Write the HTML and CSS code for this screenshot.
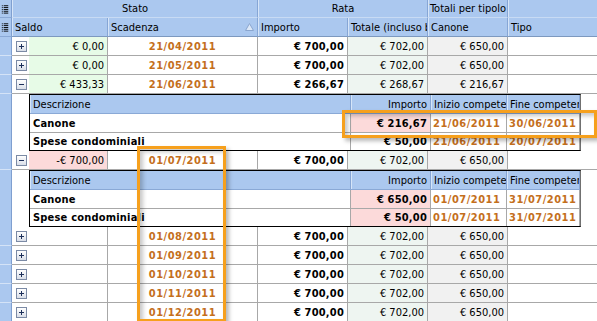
FILE: index.html
```html
<!DOCTYPE html>
<html>
<head>
<meta charset="utf-8">
<link rel="stylesheet" href="styles.css">
</head>
<body>
<div class="grid">
  <div class="hrow band">
    <div class="ind hind"><svg width="12" height="17" viewBox="0 0 12 17"><g fill="#000"><rect x="2" y="5" width="1" height="1"/><rect x="2" y="7" width="1" height="1"/><rect x="2" y="9" width="1" height="1"/><rect x="2" y="11" width="1" height="1"/><rect x="2" y="13" width="1" height="1"/><rect x="4" y="5" width="5" height="1"/><rect x="4" y="7" width="5" height="1"/><rect x="4" y="9" width="5" height="1"/><rect x="4" y="11" width="5" height="1"/><rect x="4" y="13" width="5" height="1"/></g></svg></div>
    <div class="hc center">Stato</div>
    <div class="hc center">Rata</div>
    <div class="hc center">Totali per tipolo</div>
    <div class="hc last"></div>
  </div>
  <div class="hrow cols">
    <div class="ind hind"><svg width="12" height="18" viewBox="0 0 12 18"><g fill="#000"><rect x="2" y="5" width="1" height="1"/><rect x="2" y="7" width="1" height="1"/><rect x="2" y="9" width="1" height="1"/><rect x="2" y="11" width="1" height="1"/><rect x="2" y="13" width="1" height="1"/><rect x="4" y="5" width="5" height="1"/><rect x="4" y="7" width="5" height="1"/><rect x="4" y="9" width="5" height="1"/><rect x="4" y="11" width="5" height="1"/><rect x="4" y="13" width="5" height="1"/></g></svg></div>
    <div class="hc">Saldo</div>
    <div class="hc sortable">Scadenza<svg class="sort" width="9" height="8" viewBox="0 0 9 8"><polygon points="4.5,0.5 8.5,7.5 0.5,7.5" fill="#dce8f8" stroke="#8aa6cf"/></svg></div>
    <div class="hc">Importo</div>
    <div class="hc">Totale (incluso bollo)</div>
    <div class="hc">Canone</div>
    <div class="hc last">Tipo</div>
  </div>

  <div class="row">
    <div class="ind"></div>
    <div class="btn-cell"><span class="exp plus"></span></div>
    <div class="c num saldo-pos">€ 0,00</div>
    <div class="c date">21/04/2011</div>
    <div class="c num bold">€ 700,00</div>
    <div class="c num tot">€ 702,00</div>
    <div class="c num can">€ 650,00</div>
    <div class="c last"></div>
  </div>
  <div class="row">
    <div class="ind"></div>
    <div class="btn-cell"><span class="exp plus"></span></div>
    <div class="c num saldo-pos">€ 0,00</div>
    <div class="c date">21/05/2011</div>
    <div class="c num bold">€ 700,00</div>
    <div class="c num tot">€ 702,00</div>
    <div class="c num can">€ 650,00</div>
    <div class="c last"></div>
  </div>
  <div class="row">
    <div class="ind"></div>
    <div class="btn-cell"><span class="exp minus"></span></div>
    <div class="c num saldo-pos">€ 433,33</div>
    <div class="c date">21/06/2011</div>
    <div class="c num bold">€ 266,67</div>
    <div class="c num tot">€ 268,67</div>
    <div class="c num can">€ 216,67</div>
    <div class="c last"></div>
  </div>

  <div class="detail">
    <div class="ind"></div>
    <div class="btn-cell"></div>
    <div class="sub">
      <div class="sh">Descrizione</div>
      <div class="sh num">Importo</div>
      <div class="sh">Inizio competenza</div>
      <div class="sh">Fine competenza</div>
      <div class="sc bold">Canone</div>
      <div class="sc num bold pink">€ 216,67</div>
      <div class="sc sdate">21/06/2011</div>
      <div class="sc sdate">30/06/2011</div>
      <div class="sc bold lastrow">Spese condominiali</div>
      <div class="sc num bold lastrow">€ 50,00</div>
      <div class="sc sdate lastrow">21/06/2011</div>
      <div class="sc sdate lastrow">20/07/2011</div>
    </div>
  </div>

  <div class="row">
    <div class="ind"></div>
    <div class="btn-cell"><span class="exp minus"></span></div>
    <div class="c num saldo-neg">-€ 700,00</div>
    <div class="c date">01/07/2011</div>
    <div class="c num bold">€ 700,00</div>
    <div class="c num tot">€ 702,00</div>
    <div class="c num can">€ 650,00</div>
    <div class="c last"></div>
  </div>

  <div class="detail">
    <div class="ind"></div>
    <div class="btn-cell"></div>
    <div class="sub">
      <div class="sh">Descrizione</div>
      <div class="sh num">Importo</div>
      <div class="sh">Inizio competenza</div>
      <div class="sh">Fine competenza</div>
      <div class="sc bold">Canone</div>
      <div class="sc num bold pink">€ 650,00</div>
      <div class="sc sdate">01/07/2011</div>
      <div class="sc sdate">31/07/2011</div>
      <div class="sc bold lastrow">Spese condominiali</div>
      <div class="sc num bold pink lastrow">€ 50,00</div>
      <div class="sc sdate lastrow">01/07/2011</div>
      <div class="sc sdate lastrow">31/07/2011</div>
    </div>
  </div>

  <div class="row">
    <div class="ind"></div>
    <div class="btn-cell"><span class="exp plus"></span></div>
    <div class="c num"></div>
    <div class="c date">01/08/2011</div>
    <div class="c num bold">€ 700,00</div>
    <div class="c num tot">€ 702,00</div>
    <div class="c num can">€ 650,00</div>
    <div class="c last"></div>
  </div>
  <div class="row">
    <div class="ind"></div>
    <div class="btn-cell"><span class="exp plus"></span></div>
    <div class="c num"></div>
    <div class="c date">01/09/2011</div>
    <div class="c num bold">€ 700,00</div>
    <div class="c num tot">€ 702,00</div>
    <div class="c num can">€ 650,00</div>
    <div class="c last"></div>
  </div>
  <div class="row">
    <div class="ind"></div>
    <div class="btn-cell"><span class="exp plus"></span></div>
    <div class="c num"></div>
    <div class="c date">01/10/2011</div>
    <div class="c num bold">€ 700,00</div>
    <div class="c num tot">€ 702,00</div>
    <div class="c num can">€ 650,00</div>
    <div class="c last"></div>
  </div>
  <div class="row">
    <div class="ind"></div>
    <div class="btn-cell"><span class="exp plus"></span></div>
    <div class="c num"></div>
    <div class="c date">01/11/2011</div>
    <div class="c num bold">€ 700,00</div>
    <div class="c num tot">€ 702,00</div>
    <div class="c num can">€ 650,00</div>
    <div class="c last"></div>
  </div>
  <div class="row">
    <div class="ind"></div>
    <div class="btn-cell"><span class="exp plus"></span></div>
    <div class="c num"></div>
    <div class="c date">01/12/2011</div>
    <div class="c num bold">€ 700,00</div>
    <div class="c num tot">€ 702,00</div>
    <div class="c num can">€ 650,00</div>
    <div class="c last"></div>
  </div>

  <div class="mark mark-row"></div>
  <div class="mark mark-col"></div>
</div>
</body>
</html>
```

FILE: styles.css
```css
html, body {
  margin: 0;
  padding: 0;
  background: #fff;
  overflow: hidden;
}
.grid {
  position: relative;
  width: 597px;
  height: 321px;
  overflow: hidden;
  font-family: "DejaVu Sans Condensed", "DejaVu Sans", sans-serif;
  font-size: 11px;
  color: #000;
}
.hrow, .row, .detail {
  display: grid;
}
.band {
  grid-template-columns: 12px 246px 170px 80px 1fr;
  height: 18px;
}
.cols {
  grid-template-columns: 12px 96px 150px 90px 80px 80px 1fr;
  height: 19px;
}
.row {
  grid-template-columns: 12px 17px 79px 150px 90px 80px 80px 1fr;
  height: 19px;
}
.detail {
  grid-template-columns: 12px 17px 552px 1fr;
  height: 57px;
}
.ind {
  background: #abc8ef;
  border-right: 1px solid #7f9fd0;
  border-bottom: 1px solid #d4e3f7;
  box-sizing: border-box;
}
.detail .ind {
  border-bottom: none;
}
.hind {
  display: flex;
  align-items: flex-start;
  border-bottom: 1px solid #8aa9d6;
}
.hc {
  background: #abc8ef;
  box-sizing: border-box;
  border-right: 1px solid #86a6d5;
  box-shadow: inset 1px 0 0 #d6e5f8;
  display: flex;
  align-items: center;
  padding: 0 2px 0 3px;
  white-space: nowrap;
  overflow: hidden;
  position: relative;
}
.band .hc {
  border-bottom: 1px solid #c8dbf4;
}
.cols .hc {
  border-bottom: 1px solid #7d99bf;
}
.hc.center {
  justify-content: center;
}
.hc.last {
  border-right: none;
}
.sortable {
  justify-content: space-between;
}
.sort {
  margin-right: 1px;
}
.btn-cell {
  background: #fff;
  border-bottom: 1px solid #a8a8a8;
  box-sizing: border-box;
  display: flex;
  align-items: center;
  padding-left: 4px;
}
.detail .btn-cell {
  border-bottom: none;
}
.exp {
  width: 11px;
  height: 11px;
  box-sizing: border-box;
  border: 1px solid #7b8aa5;
  background: linear-gradient(#ffffff, #d9dee8);
  position: relative;
  margin-top: 1px;
}
.exp::before {
  content: "";
  position: absolute;
  left: 2px;
  top: 4px;
  width: 5px;
  height: 1px;
  background: #1c2f5a;
}
.exp.plus::after {
  content: "";
  position: absolute;
  left: 4px;
  top: 2px;
  width: 1px;
  height: 5px;
  background: #1c2f5a;
}
.c {
  box-sizing: border-box;
  border-right: 1px solid #a8a8a8;
  border-bottom: 1px solid #a8a8a8;
  display: flex;
  align-items: center;
  padding: 0 3px;
  white-space: nowrap;
  overflow: hidden;
}
.c.last {
  border-right: none;
}
.num {
  justify-content: flex-end;
}
.bold {
  font-weight: bold;
  letter-spacing: 0.2px;
}
.date {
  justify-content: center;
  font-weight: bold;
  color: #c46f1c;
  letter-spacing: 0.5px;
}
.saldo-pos {
  background: #e7fbe7;
}
.saldo-neg {
  background: #fcdada;
}
.tot {
  background: #eef5f1;
}
.can {
  background: #f1f1f1;
}
.sub {
  display: grid;
  grid-template-columns: 321px 80px 76px 1fr;
  grid-template-rows: 19px 19px 17px;
  border: 1px solid #000;
  border-right-color: #707070;
  box-sizing: border-box;
  height: 57px;
}
.sh {
  background: #abc8ef;
  box-sizing: border-box;
  border-right: 1px solid #86a6d5;
  border-bottom: 1px solid #8aa9d6;
  box-shadow: inset 1px 0 0 #d6e5f8;
  display: flex;
  align-items: center;
  padding: 0 2px 0 3px;
  white-space: nowrap;
  overflow: hidden;
}
.sh.num {
  justify-content: flex-end;
  padding-right: 3px;
}
.sc {
  box-sizing: border-box;
  border-right: 1px solid #a8a8a8;
  border-bottom: 1px solid #a8a8a8;
  display: flex;
  align-items: center;
  padding: 0 3px;
  white-space: nowrap;
  overflow: hidden;
}
.sc.lastrow {
  border-bottom: none;
}
.sc.num {
  justify-content: flex-end;
}
.sdate {
  font-weight: bold;
  color: #c46f1c;
  padding-left: 2px;
  letter-spacing: 0.5px;
}
.pink {
  background: #fcdada;
}
.mark {
  position: absolute;
  box-sizing: border-box;
  border: 3px solid #f6a01d;
  box-shadow: 3px 3px 4px rgba(0, 0, 0, 0.28), inset 3px 3px 4px rgba(0, 0, 0, 0.22);
  pointer-events: none;
}
.mark-row {
  left: 342px;
  top: 110px;
  width: 255px;
  height: 28px;
}
.mark-col {
  left: 137px;
  top: 146px;
  width: 89px;
  height: 176px;
}
```
